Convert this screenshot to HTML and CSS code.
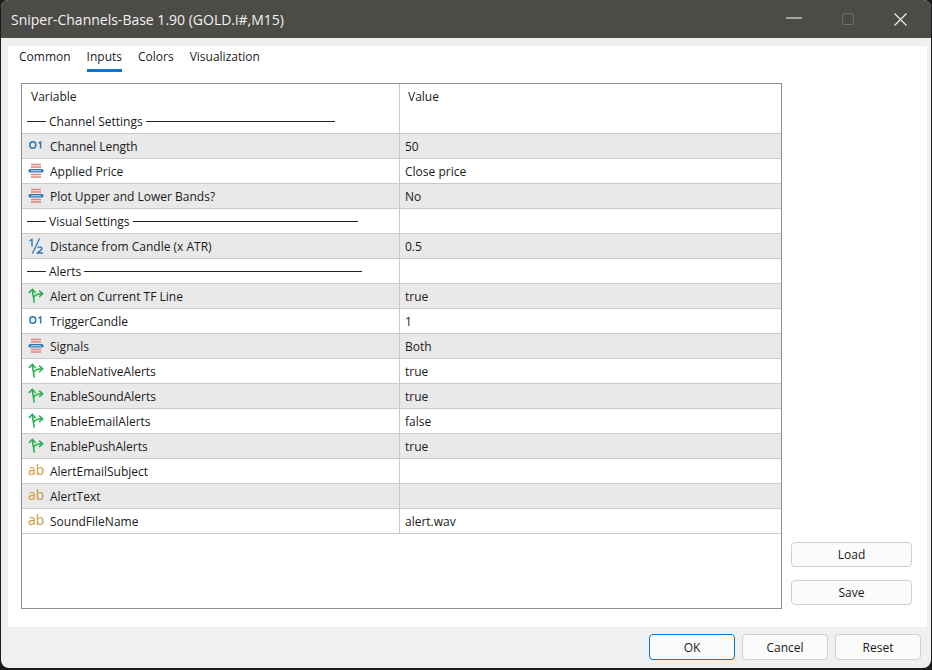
FILE: index.html
```html
<!DOCTYPE html>
<html lang="en">
<head>
  <meta charset="UTF-8">
  <title>Sniper-Channels-Base 1.90 (GOLD.i#,M15)</title>
  <link rel="stylesheet" href="styles.css">
</head>
<body>
  <svg class="defs" width="0" height="0">
    <symbol id="i-int" viewBox="0 0 16 16">
      <ellipse cx="4.8" cy="7" rx="3" ry="3.3" fill="none" stroke="#2b78b8" stroke-width="1.5"/>
      <path d="M10.5 5.2 L12.6 4 V10.5" fill="none" stroke="#2b78b8" stroke-width="1.5"/>
    </symbol>
    <symbol id="i-enum" viewBox="0 0 16 16">
      <path d="M3 1.5h10M3 4h10M3 11.5h10M3 14h10" stroke="#e8807c" stroke-width="1.3"/>
      <rect x="0.5" y="6" width="15" height="3.6" rx="1.6" fill="#2b78b8"/>
      <path d="M3 7.8h10" stroke="#cfe3f2" stroke-width="1"/>
    </symbol>
    <symbol id="i-frac" viewBox="0 0 16 16">
      <path d="M1.5 3 L4 1.5 V8.5" fill="none" stroke="#2b78b8" stroke-width="1.4"/>
      <path d="M11.5 0.5 L4.5 15.5" stroke="#2b78b8" stroke-width="1.3"/>
      <path d="M9.5 10 C10.5 8.3 14 8.5 14 10.5 C14 12.2 11 13.2 9.5 15 H15" fill="none" stroke="#2b78b8" stroke-width="1.4"/>
    </symbol>
    <symbol id="i-bool" viewBox="0 0 18 18">
      <path d="M1 5.5 L5 1.5 L8.5 5.5" fill="none" stroke="#22b14c" stroke-width="1.7"/>
      <path d="M5 2 C5 7 6.5 10 7 16.5" fill="none" stroke="#22b14c" stroke-width="1.7"/>
      <path d="M6.3 10.5 C8 7.5 11 6.5 16 6.5" fill="none" stroke="#22b14c" stroke-width="1.7"/>
      <path d="M12.5 3 L16.5 6.5 L12.5 10" fill="none" stroke="#22b14c" stroke-width="1.7"/>
    </symbol>
  </svg>

  <div class="window">
    <header class="titlebar">
      <span class="title">Sniper-Channels-Base 1.90 (GOLD.i#,M15)</span>
      <span class="win-btns">
        <svg class="min-icon" width="16" height="2"><path d="M0 1h16" stroke="#fff"/></svg>
        <svg width="12" height="12"><rect x="0.5" y="0.5" width="11" height="11" rx="1.5" fill="none" stroke="#6e6d69"/></svg>
        <svg width="13" height="13"><path d="M0.5 0.5l12 12M12.5 0.5l-12 12" stroke="#f2f2f2" stroke-width="1.1"/></svg>
      </span>
    </header>

    <main class="panel">
      <nav class="tabs">
        <span class="tab">Common</span>
        <span class="tab active">Inputs</span>
        <span class="tab">Colors</span>
        <span class="tab">Visualization</span>
      </nav>

      <div class="content">
        <div class="grid">
          <div class="row head"><div class="cell var">Variable</div><div class="cell val">Value</div></div>

          <div class="row"><div class="cell var sep"><i class="dash"></i>Channel Settings<i class="line w1"></i></div><div class="cell val"></div></div>
          <div class="row alt"><div class="cell var"><svg class="icon"><use href="#i-int"/></svg>Channel Length</div><div class="cell val">50</div></div>
          <div class="row"><div class="cell var"><svg class="icon"><use href="#i-enum"/></svg>Applied Price</div><div class="cell val">Close price</div></div>
          <div class="row alt"><div class="cell var"><svg class="icon"><use href="#i-enum"/></svg>Plot Upper and Lower Bands?</div><div class="cell val">No</div></div>
          <div class="row"><div class="cell var sep"><i class="dash"></i>Visual Settings<i class="line w2"></i></div><div class="cell val"></div></div>
          <div class="row alt"><div class="cell var"><svg class="icon"><use href="#i-frac"/></svg>Distance from Candle (x ATR)</div><div class="cell val">0.5</div></div>
          <div class="row"><div class="cell var sep"><i class="dash"></i>Alerts<i class="line w3"></i></div><div class="cell val"></div></div>
          <div class="row alt"><div class="cell var"><svg class="icon"><use href="#i-bool"/></svg>Alert on Current TF Line</div><div class="cell val">true</div></div>
          <div class="row"><div class="cell var"><svg class="icon"><use href="#i-int"/></svg>TriggerCandle</div><div class="cell val">1</div></div>
          <div class="row alt"><div class="cell var"><svg class="icon"><use href="#i-enum"/></svg>Signals</div><div class="cell val">Both</div></div>
          <div class="row"><div class="cell var"><svg class="icon"><use href="#i-bool"/></svg>EnableNativeAlerts</div><div class="cell val">true</div></div>
          <div class="row alt"><div class="cell var"><svg class="icon"><use href="#i-bool"/></svg>EnableSoundAlerts</div><div class="cell val">true</div></div>
          <div class="row"><div class="cell var"><svg class="icon"><use href="#i-bool"/></svg>EnableEmailAlerts</div><div class="cell val">false</div></div>
          <div class="row alt"><div class="cell var"><svg class="icon"><use href="#i-bool"/></svg>EnablePushAlerts</div><div class="cell val">true</div></div>
          <div class="row"><div class="cell var"><span class="ab">ab</span>AlertEmailSubject</div><div class="cell val"></div></div>
          <div class="row alt"><div class="cell var"><span class="ab">ab</span>AlertText</div><div class="cell val"></div></div>
          <div class="row"><div class="cell var"><span class="ab">ab</span>SoundFileName</div><div class="cell val">alert.wav</div></div>
        </div>

        <div class="side">
          <button class="btn side-btn">Load</button>
          <button class="btn side-btn">Save</button>
        </div>
      </div>
    </main>

    <footer class="footer">
      <button class="btn foot-btn primary">OK</button>
      <button class="btn foot-btn">Cancel</button>
      <button class="btn foot-btn">Reset</button>
    </footer>
  </div>
</body>
</html>
```

FILE: styles.css
```css
html, body {
  margin: 0;
  height: 100%;
  background: #1c1c1a;
  overflow: hidden;
}
body {
  font-family: "Open Sans", "Noto Sans", Arial, sans-serif;
  font-size: 12px;
  color: #1a1a1a;
}
.defs {
  position: absolute;
}
.window {
  box-sizing: border-box;
  width: 930px;
  height: 668px;
  margin-left: 1px;
  background: #f0f0f0;
  border-radius: 8px;
  overflow: hidden;
  display: flex;
  flex-direction: column;
}
.titlebar {
  flex: none;
  height: 38px;
  background: #4c4b47;
  color: #f2f2f2;
  display: flex;
  align-items: center;
  justify-content: space-between;
  padding: 0 24px 0 10px;
}
.title {
  font-size: 14px;
}
.win-btns {
  display: flex;
  align-items: center;
  gap: 40px;
}
.min-icon {
  margin-top: -2px;
}
.panel {
  flex: none;
  height: 581px;
  margin: 8px 4px 0 7px;
  background: #fff;
  display: flex;
  flex-direction: column;
}
.tabs {
  flex: none;
  display: flex;
  gap: 16px;
  padding-left: 11px;
  height: 26px;
}
.tab {
  padding-top: 2px;
  height: 21px;
  line-height: 18px;
}
.tab.active {
  border-bottom: 3px solid #0078d4;
}
.content {
  flex: 1;
  display: flex;
  padding: 11px 0 0 13px;
}
.grid {
  box-sizing: border-box;
  width: 761px;
  height: 526px;
  border: 1px solid #8f8f9a;
}
.row {
  display: flex;
  height: 25px;
  box-sizing: border-box;
  border-bottom: 1px solid #c9c9c9;
}
.row.head {
  border-bottom: 0;
}
.row.alt {
  background: #e9e9e9;
}
.cell {
  display: flex;
  align-items: center;
  box-sizing: border-box;
  white-space: nowrap;
}
.var {
  width: 378px;
  padding-left: 6px;
  border-right: 1px solid #c9c9c9;
}
.val {
  padding-left: 5px;
}
.head .var {
  padding-left: 9px;
}
.head .val {
  padding-left: 8px;
}
.icon {
  width: 16px;
  height: 16px;
  margin-right: 6px;
  flex: none;
}
.ab {
  width: 16px;
  margin-right: 6px;
  color: #d09a3a;
  font-size: 14px;
  line-height: 16px;
  margin-top: -3px;
  flex: none;
}
.sep {
  padding-left: 5px;
}
.dash, .line {
  display: block;
  height: 1px;
  background: #222;
}
.dash {
  width: 19px;
  margin-right: 3px;
}
.line {
  margin-left: 3px;
}
.line.w1 { width: 189px; }
.line.w2 { width: 225px; }
.line.w3 { width: 278px; }
.side {
  margin-left: 9px;
  padding-top: 459px;
  display: flex;
  flex-direction: column;
  gap: 13px;
}
.btn {
  box-sizing: border-box;
  height: 25px;
  background: #fbfbfb;
  border: 1px solid #d0d0d0;
  border-radius: 4px;
  font: inherit;
  color: inherit;
  padding: 0;
}
.side-btn {
  width: 121px;
}
.footer {
  flex: 1;
  display: flex;
  justify-content: flex-end;
  gap: 7px;
  padding: 7px 10px 0 0;
}
.foot-btn {
  width: 86px;
  height: 26px;
}
.primary {
  border-color: #0078d4;
}
```
